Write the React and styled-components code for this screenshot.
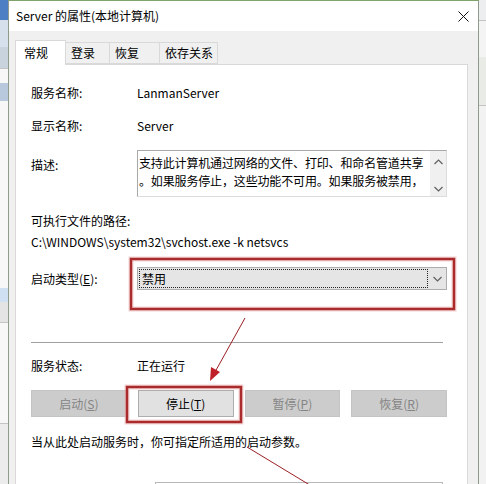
import React from 'react';
import styled, { createGlobalStyle } from 'styled-components';

const GlobalStyle = createGlobalStyle`
  html, body {
    margin: 0;
    padding: 0;
    background: #f0f0f0;
  }
  body {
    font-family: "Noto Sans CJK SC", "Noto Sans", sans-serif;
    font-size: 12px;
    color: #000;
  }
`;

const Screen = styled.div`
  position: relative;
  width: 486px;
  height: 484px;
  overflow: hidden;
  display: flex;
  background: #eef0f2;
`;

const BackStrip = styled.div`
  flex: none;
  width: ${p => p.w}px;
  display: flex;
  flex-direction: column;
  background: #f7f7f7;
`;

const BackBlock = styled.div`
  height: ${p => p.h}px;
  background: ${p => p.c};
  border-bottom: ${p => (p.line ? '1px solid #c4c4c4' : 'none')};
`;

const Window = styled.div`
  flex: none;
  width: 471px;
  display: flex;
  flex-direction: column;
  border: 1px solid #8e9a8a;
  border-top-color: #7ea36b;
  border-bottom: none;
  box-sizing: border-box;
  background: #f0f0f0;
`;

const TitleBar = styled.div`
  height: 30px;
  flex: none;
  display: flex;
  align-items: center;
  justify-content: space-between;
  background: #fff;
  padding-left: 7px;
`;

const Title = styled.span`
  font-size: 12px;
  line-height: 16px;
`;

const CloseBox = styled.div`
  width: 30px;
  height: 30px;
  display: flex;
  align-items: center;
  justify-content: center;
`;

const Body = styled.div`
  flex: 1;
  display: flex;
  flex-direction: column;
  padding: 9px 10px 0 6px;
`;

const TabRow = styled.div`
  display: flex;
  align-items: flex-end;
  height: 24px;
  position: relative;
  z-index: 1;
`;

const Tab = styled.div`
  box-sizing: border-box;
  width: ${p => p.w}px;
  height: ${p => (p.active ? 25 : 22)}px;
  margin-bottom: ${p => (p.active ? -1 : 0)}px;
  padding-left: ${p => (p.active ? 8 : 5)}px;
  display: flex;
  align-items: center;
  background: ${p => (p.active ? '#fff' : '#f0f0f0')};
  border: 1px solid #d9d9d9;
  border-bottom: ${p => (p.active ? 'none' : '1px solid #d9d9d9')};
  border-left: ${p => (p.first ? '1px solid #d9d9d9' : 'none')};
  line-height: 16px;
`;

const Panel = styled.div`
  flex: 1;
  display: flex;
  flex-direction: column;
  background: #fff;
  border: 1px solid #d9d9d9;
  border-bottom: none;
  padding: 18px 20px 0 15px;
  overflow: hidden;
`;

const Field = styled.div`
  display: flex;
  align-items: ${p => (p.top ? 'flex-start' : 'center')};
  margin-top: ${p => p.mt || 0}px;
  line-height: 20px;
  white-space: nowrap;
`;

const Label = styled.div`
  flex: none;
  width: ${p => p.w || 106}px;
  margin-top: ${p => p.mt || 0}px;
`;

const Line = styled.div`
  margin-top: ${p => p.mt || 0}px;
  line-height: 20px;
  white-space: nowrap;
`;

const DescBox = styled.div`
  flex: 1;
  height: 47px;
  box-sizing: border-box;
  display: flex;
  border: 1px solid #dcdcdc;
  border-top-color: #a9a9a9;
  border-left-color: #a9a9a9;
`;

const DescText = styled.div`
  flex: 1;
  padding: 3px 0 0 1px;
  line-height: 18px;
  letter-spacing: -0.15px;
  overflow: hidden;
`;

const ScrollBar = styled.div`
  width: 16px;
  flex: none;
  background: #f0f0f0;
  display: flex;
  flex-direction: column;
  justify-content: space-between;
  align-items: center;
  padding: 8px 0 4px;
`;

const Combo = styled.div`
  flex: 1;
  height: 23px;
  box-sizing: border-box;
  display: flex;
  align-items: stretch;
  background: #e5e5e5;
  border: 1px solid #adadad;
`;

const ComboValue = styled.div`
  flex: 1;
  margin: 1px 0 1px 1px;
  padding-left: 2px;
  border: 1px dotted #222;
  display: flex;
  align-items: center;
  line-height: 16px;
`;

const ComboArrow = styled.div`
  width: 18px;
  display: flex;
  align-items: center;
  justify-content: center;
`;

const Separator = styled.div`
  height: 1px;
  background: #a0a0a0;
  margin: 52px 4px 0 0;
`;

const ButtonRow = styled.div`
  display: grid;
  grid-template-columns: repeat(4, 1fr);
  column-gap: 11px;
  margin-top: 14px;
`;

const Button = styled.div`
  height: 27px;
  box-sizing: border-box;
  display: flex;
  align-items: center;
  justify-content: center;
  background: ${p => (p.disabled ? '#cccccc' : '#e1e1e1')};
  border: 1px solid ${p => (p.disabled ? '#c4c4c4' : '#adadad')};
  color: ${p => (p.disabled ? '#858585' : '#000')};
  line-height: 16px;
`;

const InputSpacer = styled.div`
  flex: none;
  width: 124px;
`;

const Input = styled.div`
  flex: 1;
  height: 23px;
  box-sizing: border-box;
  border: 1px solid #b8b8b8;
  margin-right: 4px;
`;

const Overlay = styled.svg`
  position: absolute;
  left: 0;
  top: 0;
  pointer-events: none;
`;

const Chevron = ({ up }) => (
  <svg width="9" height="6" viewBox="0 0 9 6">
    <path
      d={up ? 'M0.5 5 L4.5 1 L8.5 5' : 'M0.5 1 L4.5 5 L8.5 1'}
      fill="none"
      stroke="#606060"
      strokeWidth="1.2"
    />
  </svg>
);

const Key = ({ children }) => <u>{children}</u>;

export default function App() {
  return (
    <>
      <GlobalStyle />
      <Screen>
        <BackStrip w={8}>
          <BackBlock h={20} c="#4d7fc4" />
          <BackBlock h={27} c="#d6e0ec" />
          <BackBlock h={21} c="#c9d3de" line />
          <BackBlock h={14} c="#f7f7f7" />
          <BackBlock h={18} c="#b9c9dd" />
          <BackBlock h={188} c="#f7f7f7" />
          <BackBlock h={14} c="#cfe0f3" />
          <BackBlock h={20} c="#e4e4e4" line />
          <BackBlock h={100} c="#f7f7f7" line />
          <BackBlock h={60} c="#ececec" />
        </BackStrip>
        <Window>
          <TitleBar>
            <Title>Server 的属性(本地计算机)</Title>
            <CloseBox>
              <svg width="11" height="11" viewBox="0 0 11 11">
                <path d="M0.5 0.5 L10.5 10.5 M10.5 0.5 L0.5 10.5" stroke="#111" strokeWidth="1" />
              </svg>
            </CloseBox>
          </TitleBar>
          <Body>
            <TabRow>
              <Tab w={51} active first>常规</Tab>
              <Tab w={44}>登录</Tab>
              <Tab w={50}>恢复</Tab>
              <Tab w={58}>依存关系</Tab>
            </TabRow>
            <Panel>
              <Field>
                <Label>服务名称:</Label>
                <span>LanmanServer</span>
              </Field>
              <Field mt={13}>
                <Label>显示名称:</Label>
                <span>Server</span>
              </Field>
              <Field mt={14} top>
                <Label mt={5}>描述:</Label>
                <DescBox>
                  <DescText>
                    <div>支持此计算机通过网络的文件、打印、和命名管道共享</div>
                    <div>。如果服务停止，这些功能不可用。如果服务被禁用，</div>
                  </DescText>
                  <ScrollBar>
                    <Chevron up />
                    <Chevron />
                  </ScrollBar>
                </DescBox>
              </Field>
              <Line mt={14}>可执行文件的路径:</Line>
              <Line mt={1}>C:\WINDOWS\system32\svchost.exe -k netsvcs</Line>
              <Field mt={15}>
                <Label>
                  启动类型(<Key>E</Key>):
                </Label>
                <Combo>
                  <ComboValue>禁用</ComboValue>
                  <ComboArrow>
                    <Chevron />
                  </ComboArrow>
                </Combo>
              </Field>
              <Separator />
              <Field mt={13}>
                <Label>服务状态:</Label>
                <span>正在运行</span>
              </Field>
              <ButtonRow>
                <Button disabled>
                  启动(<Key>S</Key>)
                </Button>
                <Button>
                  停止(<Key>T</Key>)
                </Button>
                <Button disabled>
                  暂停(<Key>P</Key>)
                </Button>
                <Button disabled>
                  恢复(<Key>R</Key>)
                </Button>
              </ButtonRow>
              <Line mt={15}>当从此处启动服务时，你可指定所适用的启动参数。</Line>
              <Field mt={30} top>
                <InputSpacer />
                <Input />
              </Field>
            </Panel>
          </Body>
        </Window>
        <BackStrip w={7}>
          <BackBlock h={20} c="#eceef0" line />
          <BackBlock h={36} c="#f4f4f4" />
          <BackBlock h={48} c="#e9ece6" line />
          <BackBlock h={380} c="#f2f2f2" />
        </BackStrip>
        <Overlay width="486" height="484" viewBox="0 0 486 484">
          <g fill="none" stroke="#f0b8b8" strokeWidth="5" opacity="0.6">
            <rect x="131" y="259" width="323" height="50" />
            <rect x="127" y="387" width="114" height="35" />
          </g>
          <g fill="none" stroke="#a92b2b" strokeWidth="2.5">
            <rect x="131" y="259" width="323" height="50" />
            <rect x="127" y="387" width="114" height="35" />
          </g>
          <g stroke="#9b1f24" strokeWidth="1">
            <line x1="245" y1="318" x2="215" y2="372" />
            <line x1="247" y1="447" x2="318" y2="490" />
          </g>
          <path d="M210 381 L211 367 L220 372 Z" fill="#c0202a" />
        </Overlay>
      </Screen>
    </>
  );
}
